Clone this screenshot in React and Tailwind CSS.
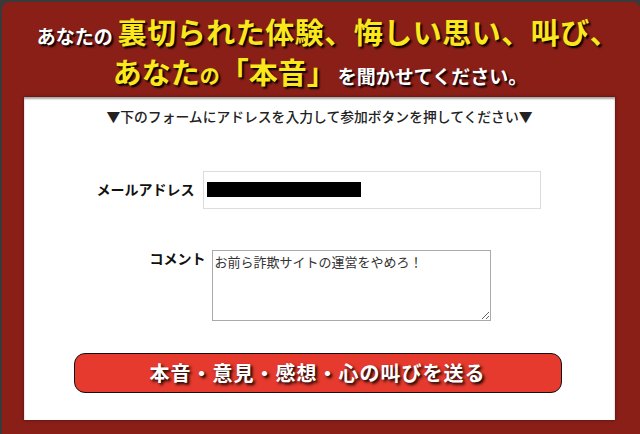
import React from 'react';

const jp = { fontFamily: '"Noto Sans CJK JP", "Noto Sans", sans-serif' };

const App = () => {
  return (
    <div className="w-[640px] h-[434px] bg-[#3a3a3a] pl-[2px] pt-[2px] overflow-hidden" style={jp}>
      <div className="h-full bg-[#8a1f18] rounded-t-[7px] flex flex-col">
        {/* heading */}
        <div className="pt-[9px] flex flex-col items-center font-bold [text-shadow:2px_2px_2px_#000]">
          <div className="flex items-baseline h-[40px] leading-[40px] ml-[14px]">
            <span className="text-white text-[19px] mr-[5px]">あなたの</span>
            <span className="text-[#f8e81c] text-[29px] tracking-[0.5px]">裏切られた体験、悔しい思い、叫び、</span>
          </div>
          <div className="flex items-baseline h-[40px] leading-[40px] -ml-[2px]">
            <span className="text-[#f8e81c] text-[29px]">あなた</span>
            <span className="text-[#f8e81c] text-[20px]">の</span>
            <span className="text-[#f8e81c] text-[29px]">「本音」</span>
            <span className="text-white text-[19px] ml-[2px]">を聞かせてください。</span>
          </div>
        </div>

        {/* form panel */}
        <div className="ml-[22px] mr-[25px] mt-[6px] h-[323px] bg-white shadow-[inset_0_2px_2px_rgba(0,0,0,0.35),0_0_3px_rgba(0,0,0,0.5)] flex flex-col items-center">
          <p className="mt-[9px] text-[13.8px] text-[#222] font-medium">
            ▼下のフォームにアドレスを入力して参加ボタンを押してください▼
          </p>

          <div className="mt-[44px] flex items-center gap-[8px] -ml-[2px]">
            <span className="text-[14px] font-bold text-[#111]">メールアドレス</span>
            <div className="w-[338px] h-[38px] border border-[#dcdcdc] flex items-center pl-[3px]">
              <div className="w-[154px] h-[15px] bg-black" />
            </div>
          </div>

          <div className="mt-[41px] flex items-start gap-[6px] ml-[1px]">
            <span className="text-[14px] font-bold text-[#111] leading-[16px]">コメント</span>
            <textarea
              className="w-[279px] h-[71px] border border-[#aaa] text-[13px] text-[#333] px-[2px] py-[2px] leading-[17px] outline-none"
              style={jp}
              defaultValue="お前ら詐欺サイトの運営をやめろ！"
            />
          </div>

          <button
            className="mt-[32px] w-[488px] h-[40px] bg-[#e53a2d] border-[1.5px] border-[#111] rounded-[11px] text-white font-bold text-[20px] tracking-[1px] [text-shadow:2px_2px_3px_#000] flex items-center justify-center -ml-[4px]"
            style={jp}
          >
            本音・意見・感想・心の叫びを送る
          </button>
        </div>
      </div>
    </div>
  );
};

export default App;
